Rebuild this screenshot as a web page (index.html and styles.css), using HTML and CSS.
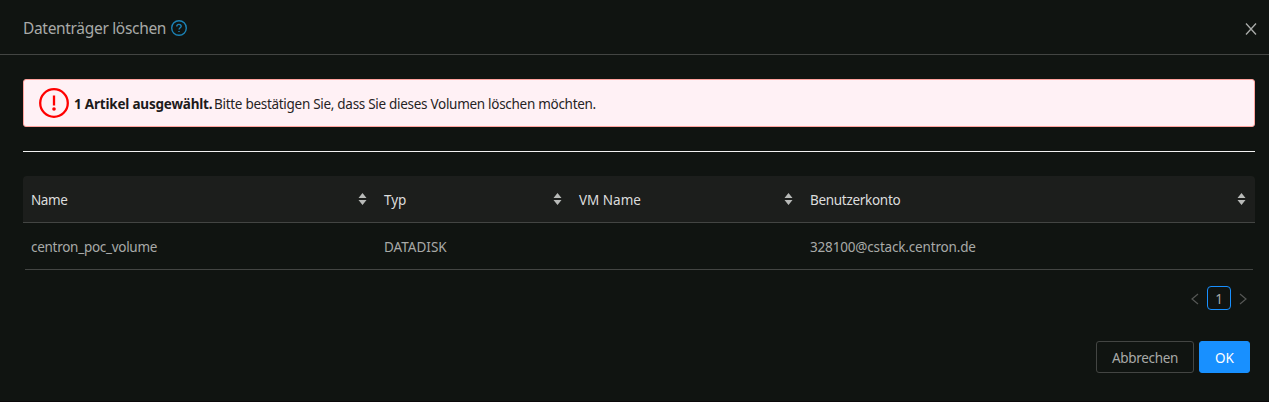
FILE: index.html
```html
<!DOCTYPE html>
<html lang="de">
<head>
<meta charset="utf-8">
<title>Datenträger löschen</title>
<link rel="stylesheet" href="styles.css">
</head>
<body>
<div class="modal">
  <header class="modal-header">
    <div class="modal-title"><span>Datenträger löschen</span>
      <svg class="help" viewBox="0 0 16 16"><circle cx="8" cy="8" r="7.3"/><path d="M5.8 6.4C5.8 3.7 10.2 3.7 10.2 6.3C10.2 7.8 8 7.8 8 9.6M8 10.9V12.1"/></svg>
    </div>
    <svg class="close" viewBox="0 0 12 12"><path d="M1 .5L11 11.5M11 .5L1 11.5"/></svg>
  </header>
  <main class="modal-body">
    <div class="alert">
      <svg class="alert-icon" viewBox="0 0 30 30"><circle cx="15" cy="15" r="13.8"/><path d="M15 7.5V17.5"/><circle class="dot" cx="15" cy="21" r="1.8"/></svg>
      <b class="alert-count">1 Artikel ausgewählt.</b><span class="alert-text">Bitte bestätigen Sie, dass Sie dieses Volumen löschen möchten.</span>
    </div>
    <div class="divider"></div>
    <div class="table">
      <div class="row head">
        <div class="cell"><span class="name">Name</span><svg class="sorter" viewBox="0 0 8 12"><path d="M4 0L8 5H0ZM0 7H8L4 12Z"/></svg></div>
        <div class="cell"><span>Typ</span><svg class="sorter" viewBox="0 0 8 12"><path d="M4 0L8 5H0ZM0 7H8L4 12Z"/></svg></div>
        <div class="cell"><span>VM Name</span><svg class="sorter" viewBox="0 0 8 12"><path d="M4 0L8 5H0ZM0 7H8L4 12Z"/></svg></div>
        <div class="cell"><span class="konto">Benutzerkonto</span><svg class="sorter" viewBox="0 0 8 12"><path d="M4 0L8 5H0ZM0 7H8L4 12Z"/></svg></div>
      </div>
      <div class="row data">
        <div class="cell"><span class="volume">centron_poc_volume</span></div>
        <div class="cell"><span class="type">DATADISK</span></div>
        <div class="cell"></div>
        <div class="cell"><span class="account">328100@cstack.centron.de</span></div>
      </div>
    </div>
    <nav class="pagination">
      <svg class="arrow" viewBox="0 0 8 12"><path d="M7 1L1 6L7 11"/></svg>
      <span class="page">1</span>
      <svg class="arrow" viewBox="0 0 8 12"><path d="M1 1L7 6L1 11"/></svg>
    </nav>
    <div class="actions">
      <button class="btn cancel">Abbrechen</button>
      <button class="btn ok">OK</button>
    </div>
  </main>
</div>
</body>
</html>
```
FILE: styles.css
```css
* { box-sizing: border-box; }
body { margin: 0; background: #101411; font: 13.5px/22px "Segoe UI", "Noto Sans", sans-serif; color: #a8aaa8; overflow: hidden; }
svg { display: block; flex: none; fill: none; }
.modal { height: 402px; border-bottom: 1px solid #0b080a; }
.modal-header { height: 55px; padding: 2px 12px 0 23px; display: flex; align-items: center; justify-content: space-between; border-bottom: 1px solid #434543; }
.modal-title { display: flex; align-items: center; gap: 5px; font-size: 15.5px; }
.modal-title span { width: 143px; white-space: nowrap; letter-spacing: -.32px; }
.help { width: 16px; height: 16px; stroke: #1b82b5; stroke-width: 1.4; }
.close { width: 12px; height: 12px; margin-top: 2px; stroke: #aaacaa; stroke-width: 1.3; }
.modal-body { padding: 24px 14px 0 23px; }
.alert { height: 48px; padding: 0 15px; display: flex; align-items: center; border: 1px solid #ffa39e; border-radius: 3px; background: #fff1f5; color: #262324; white-space: nowrap; }
.alert-icon { width: 30px; height: 30px; margin-right: 5px; stroke: #f00; stroke-width: 2.3; }
.alert-icon .dot { fill: #f00; stroke: none; }
.alert-count { width: 140px; color: #1c1a1b; padding-top: 2px; letter-spacing: -.2px; }
.alert-text { padding-top: 2px; letter-spacing: -.29px; }
.divider { height: 1px; margin: 24px 0; background: #f2f2f2; }
.row { display: grid; grid-template-columns: 353px 195px 231px 1fr; height: 47px; border-bottom: 1px solid #434543; }
.cell { display: flex; align-items: center; justify-content: space-between; padding: 2px 9px 0 8px; }
.head { background: #1c1e1c; color: #dcdddc; border-radius: 4px 4px 0 0; }
.data { margin: 0 2px; grid-template-columns: 351px 195px 231px 1fr; }
.data .cell:first-child { padding-left: 6px; }
.name { letter-spacing: -.4px; }
.konto { letter-spacing: -.3px; }
.volume { letter-spacing: -.28px; }
.account { letter-spacing: -.17px; }
.sorter { width: 9px; height: 12px; margin-bottom: 3px; fill: #b8bab8; }
.pagination { display: flex; align-items: center; justify-content: flex-end; gap: 8px; margin: 16px 8px 0 0; }
.arrow { width: 8px; height: 12px; margin-top: 2px; stroke: #555755; stroke-width: 1.2; }
.page { width: 24px; height: 24px; line-height: 25px; text-align: center; border: 1px solid #1890ff; border-radius: 4px; }
.actions { display: flex; justify-content: flex-end; gap: 5px; margin: 31px 5px 0 0; }
.btn { height: 32px; padding: 2px 0 0; border: 1px solid #434543; border-radius: 3px; background: transparent; color: #a8aaa8; font: inherit; }
.cancel { width: 98px; letter-spacing: -.33px; }
.ok { width: 51px; border-color: #1890ff; background: #1890ff; color: #fff; }
```
